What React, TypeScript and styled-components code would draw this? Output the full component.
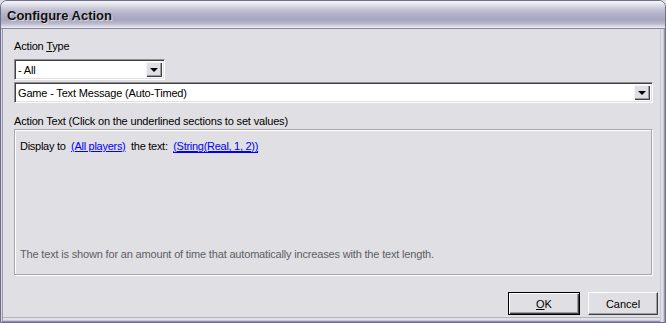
import React from "react";
import styled, { createGlobalStyle } from "styled-components";

const Global = createGlobalStyle`
  html, body { margin: 0; padding: 0; background: #e0dfe3; }
  body { width: 666px; height: 323px; overflow: hidden; }
`;

const Window = styled.div`
  width: 666px;
  height: 323px;
  box-sizing: border-box;
  display: flex;
  flex-direction: column;
  border: 1px solid #6e6d8a;
  border-radius: 7px 7px 0 0;
  overflow: hidden;
  background: #e0dfe3;
  font-family: "Liberation Sans", Arial, sans-serif;
  font-size: 11px;
  letter-spacing: -0.17px;
  color: #000;
`;

const TitleBar = styled.div`
  height: 28px;
  flex: none;
  box-sizing: border-box;
  display: flex;
  align-items: center;
  padding: 1px 0 0 6px;
  background: linear-gradient(
    to bottom,
    #f7f7fa 0px,
    #e6e6ee 3px,
    #c6c5d6 8px,
    #b0afc6 14px,
    #a7a6bf 19px,
    #bdbdd0 23px,
    #e2e2ea 26px,
    #f4f4f8 28px
  );
  border-bottom: 1px solid #8a89a3;
`;

const Title = styled.span`
  font-family: "Liberation Sans", Arial, sans-serif;
  font-weight: bold;
  font-size: 13px;
  letter-spacing: 0;
  color: #101010;
  text-shadow: 1px 1px 0 rgba(255, 255, 255, 0.55);
`;

const Body = styled.div`
  flex: 1;
  display: flex;
  flex-direction: column;
  padding: 10px 7px 0 13px;
  box-shadow: inset 1px 0 #d6d6e0, inset 2px 0 #9a99b0, inset -1px 0 #9a99b0,
    inset -2px 0 #c7c7d4, inset -4px 0 #e0dfe3, inset -5px 0 #c6c6d2,
    inset 0 -1px #8f8fa6, inset 0 -2px #c7c7d4, inset 0 -4px #e0dfe3, inset 0 -5px #b3b3c4;
`;

const Label = styled.div<{ $top?: number }>`
  margin-top: ${(p) => p.$top ?? 0}px;
  line-height: 14px;
  height: 14px;
`;

const Accel = styled.span`
  text-decoration: underline;
`;

const Combo = styled.div<{ $width: string; $top: number }>`
  margin-top: ${(p) => p.$top}px;
  width: ${(p) => p.$width};
  height: 21px;
  box-sizing: border-box;
  display: flex;
  align-items: stretch;
  background: #fff;
  border: 1px solid;
  border-color: #8f8f94 #fdfdfd #fdfdfd #8f8f94;
  box-shadow: inset 1px 1px #404040, inset -1px -1px #e0dfe3;
`;

const ComboText = styled.div`
  flex: 1;
  padding: 0 3px;
  display: flex;
  align-items: center;
  white-space: nowrap;
`;

const ArrowButton = styled.div`
  width: 16px;
  margin: 2px 2px 2px 0;
  box-sizing: border-box;
  background: #e0dfe3;
  display: flex;
  align-items: center;
  justify-content: center;
  box-shadow: inset 1px 1px #f4f4f4, inset -1px -1px #404040, inset -2px -2px #9d9da1;
`;

const Triangle = styled.div`
  width: 0;
  height: 0;
  border-left: 4px solid transparent;
  border-right: 4px solid transparent;
  border-top: 4px solid #000;
  margin-top: 1px;
`;

const Panel = styled.div`
  margin-top: 1px;
  width: 639px;
  height: 147px;
  box-sizing: border-box;
  display: flex;
  flex-direction: column;
  justify-content: space-between;
  padding: 9px 5px 14px 5px;
  border: 1px solid;
  border-color: #a7a6aa #ffffff #ffffff #a7a6aa;
  box-shadow: inset -1px -1px #a7a6aa, inset 1px 1px #ffffff;
`;

const Line = styled.div`
  line-height: 14px;
  white-space: nowrap;
  letter-spacing: -0.28px;
`;

const Link = styled.a<{ $focused?: boolean }>`
  color: #0000ff;
  text-decoration: underline;
  cursor: pointer;
  border-bottom: ${(p) => (p.$focused ? "1px solid #0000ff" : "none")};
`;

const Note = styled.div`
  line-height: 14px;
  color: #5e5e66;
  white-space: nowrap;
`;

const ButtonRow = styled.div`
  display: flex;
  justify-content: flex-end;
  gap: 8px;
  margin-top: 16px;
`;

const Button = styled.button<{ $default?: boolean; $width: number }>`
  width: ${(p) => p.$width}px;
  height: 23px;
  box-sizing: border-box;
  font-family: "Liberation Sans", Arial, sans-serif;
  font-size: 11px;
  color: #000;
  background: #e0dfe3;
  padding: 0;
  border: 1px solid;
  border-color: ${(p) => (p.$default ? "#000" : "#fff #404040 #404040 #fff")};
  box-shadow: ${(p) =>
    p.$default
      ? "inset 1px 1px #fff, inset -1px -1px #404040, inset -2px -2px #9d9da1"
      : "inset -1px -1px #9d9da1"};
`;

export default function App() {
  return (
    <>
      <Global />
      <Window>
        <TitleBar>
          <Title>Configure Action</Title>
        </TitleBar>
        <Body>
          <Label>
            Action <Accel>T</Accel>ype
          </Label>
          <Combo $width="151px" $top={6}>
            <ComboText>- All</ComboText>
            <ArrowButton>
              <Triangle />
            </ArrowButton>
          </Combo>
          <Combo $width="639px" $top={2}>
            <ComboText>Game - Text Message (Auto-Timed)</ComboText>
            <ArrowButton>
              <Triangle />
            </ArrowButton>
          </Combo>
          <Label $top={11}>
            Action Text (Click on the underlined sections to set values)
          </Label>
          <Panel>
            <Line>
              Display to&nbsp; <Link>(All players)</Link>&nbsp; the text:&nbsp;{" "}
              <Link $focused>(String(Real, 1, 2))</Link>
            </Line>
            <Note>
              The text is shown for an amount of time that automatically increases with the text length.
            </Note>
          </Panel>
          <ButtonRow>
            <Button $default $width={72}>
              <Accel>O</Accel>K
            </Button>
            <Button $width={70}>Cancel</Button>
          </ButtonRow>
        </Body>
      </Window>
    </>
  );
}
